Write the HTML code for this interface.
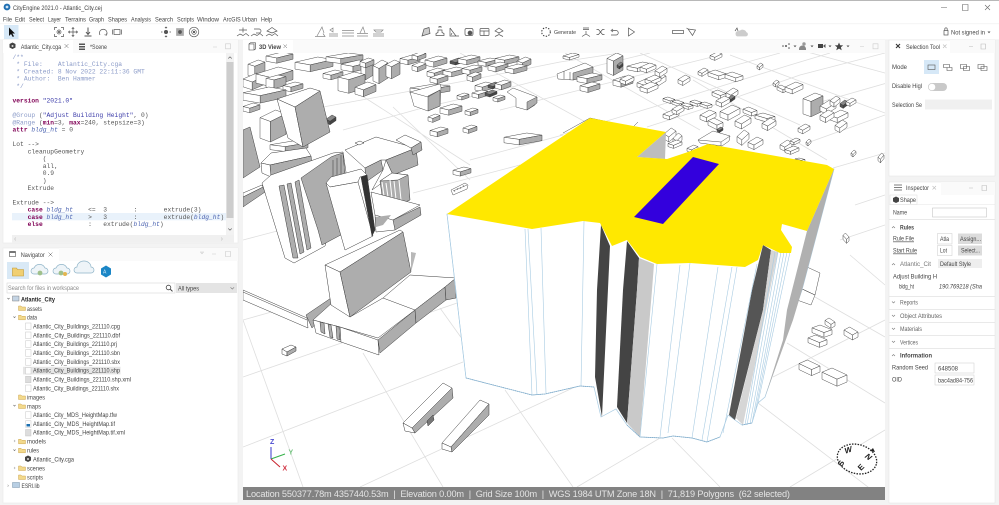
<!DOCTYPE html>
<html><head><meta charset="utf-8"><title>CityEngine 2021.0 - Atlantic_City.cej</title>
<style>
html,body{margin:0;padding:0;width:999px;height:505px;overflow:hidden;background:#f2f2f2}
svg{display:block;filter:blur(.38px)}
text{font-family:"Liberation Sans",sans-serif;fill:#444;font-size:6.5px;white-space:pre}
text.m{font-family:"Liberation Mono",monospace;font-size:6.3px;fill:#555}
.c{fill:#8b9bc8!important}
.k{fill:#7f0055!important;font-weight:bold}
.s{fill:#3a3aa8!important}
.i{fill:#4a62b0!important;font-style:italic}
.ic{fill:none;stroke:#555;stroke-width:.7}
.b *{vector-effect:non-scaling-stroke}
.g{fill:none;stroke:#dedede;stroke-width:.8}
.bd{stroke:#3a3a3a;stroke-width:.45;fill:#fff}
.sym *{stroke:#3a3a3a;stroke-width:.45;vector-effect:non-scaling-stroke}
.bl{stroke:#a8cbe2;stroke-width:.6;fill:none}
.gt text,text.gt{fill:#666}
</style></head><body>
<svg width="999" height="505" viewBox="0 0 999 505" xmlns="http://www.w3.org/2000/svg">
<defs>
<clipPath id="vp"><rect x="243" y="53" width="642" height="434"/></clipPath>
<g id="b" class="sym"><path d="M0 5L12 0L20 2.500L8 7.500Z" fill="#fff"/><path d="M0 5L8 7.500V14L0 11.500Z" fill="#fff"/><path d="M8 7.500L20 2.500V9L8 14Z" fill="#adadad"/></g>
<g id="t" class="sym"><path d="M0 6L12 0L20 3L8 9Z" fill="#fff"/><path d="M0 6L8 9V25L0 22Z" fill="#fff"/><path d="M8 9L20 3V19L8 25Z" fill="#adadad"/></g>
<g id="w" class="sym"><path d="M0 6L12 0L20 3L8 9Z" fill="#fff"/><path d="M0 6L8 9V14L0 11Z" fill="#fff"/><path d="M8 9L20 3V8L8 14Z" fill="#fff"/></g>
<g id="n" class="sym"><path d="M0 3L8 0L20 5L12 8Z" fill="#fff"/><path d="M0 3L12 8V13L0 8Z" fill="#fff"/><path d="M12 8L20 5V10L12 13Z" fill="#fff"/></g>
<g id="d" class="sym"><path d="M0 6L12 0L20 3L8 9Z" fill="#888"/><path d="M0 6L8 9V14L0 11Z" fill="#555"/><path d="M8 9L20 3V8L8 14Z" fill="#444"/></g>
</defs>

<!-- window chrome -->
<rect width="999" height="505" fill="#f3f3f3"/>
<rect width="999" height="40" fill="#fff"/>
<rect width="999" height="1" fill="#b8b8b8"/>
<rect y="23.500" width="999" height=".6" fill="#ececec"/>
<rect y="39.500" width="999" height=".6" fill="#ececec"/>
<circle cx="7" cy="7" r="3.400" fill="#1f6fb2"/><circle cx="7" cy="7" r="1.400" fill="#cfe4f5"/>
<text x="13" y="9.800" style="font-size:6.800px" textLength="89" lengthAdjust="spacingAndGlyphs">CityEngine 2021.0 - Atlantic_City.cej</text>
<path d="M941 7.500h6M962.500 4.500h5.500v6h-5.500zM985 5l5 5M990 5l-5 5" fill="none" stroke="#666" stroke-width=".6"/>
<g>
<text x="3" y="21.500" textLength="9" lengthAdjust="spacingAndGlyphs">File</text>
<text x="15" y="21.500" textLength="10" lengthAdjust="spacingAndGlyphs">Edit</text>
<text x="29" y="21.500" textLength="15" lengthAdjust="spacingAndGlyphs">Select</text>
<text x="48" y="21.500" textLength="13" lengthAdjust="spacingAndGlyphs">Layer</text>
<text x="65" y="21.500" textLength="21" lengthAdjust="spacingAndGlyphs">Terrains</text>
<text x="89" y="21.500" textLength="15" lengthAdjust="spacingAndGlyphs">Graph</text>
<text x="108" y="21.500" textLength="19" lengthAdjust="spacingAndGlyphs">Shapes</text>
<text x="131" y="21.500" textLength="20" lengthAdjust="spacingAndGlyphs">Analysis</text>
<text x="155" y="21.500" textLength="18" lengthAdjust="spacingAndGlyphs">Search</text>
<text x="177" y="21.500" textLength="17" lengthAdjust="spacingAndGlyphs">Scripts</text>
<text x="197" y="21.500" textLength="22" lengthAdjust="spacingAndGlyphs">Window</text>
<text x="223" y="21.500" textLength="34" lengthAdjust="spacingAndGlyphs">ArcGIS Urban</text>
<text x="261" y="21.500" textLength="11" lengthAdjust="spacingAndGlyphs">Help</text>
</g>

<!-- toolbar -->
<rect x="4" y="25" width="14.500" height="14" fill="#d6e8f7"/>
<path d="M9 27.500V36L11 34L12.800 37L14 36.300L12.300 33.500H15Z" fill="#111"/>
<g class="ic">
<path d="M54.500 30v-2.500h2.500M61 27.500h2.500V30M63.500 34v2.500H61M57 36.500h-2.500V34"/><circle cx="59" cy="32" r="2"/><circle cx="59" cy="32" r=".7" fill="#555"/>
<path d="M73 27.500v9M68.500 32h9M71.800 28.700L73 27.500l1.200 1.200M71.800 35.300L73 36.500l1.200-1.200M69.700 30.800L68.500 32l1.200 1.200M76.300 30.800L77.500 32l-1.200 1.200"/>
<path d="M88 27.500v6.500M86 32l2 2.500 2-2.500M84.500 36h7" stroke-width="1"/>
<path d="M100 35a3.800 3.800 0 1 1 6.500 0M106.800 33l-.3 2.200-2-.5"/>
<rect x="114" y="29.500" width="6" height="5"/><path d="M112.500 29.500v5M121.500 29.500v5"/>
<circle cx="166" cy="32" r="1.700" fill="#555"/><path d="M166 27v1.500M166 35.500V37M161 32h1.500M169.500 32h1.500M164.900 28l1.100-1 1.100 1M164.900 36l1.100 1 1.100-1"/>
<rect x="176.500" y="28.500" width="7" height="7" fill="#aaa" stroke="#aaa"/><circle cx="180" cy="32" r="1.500" fill="#555"/>
<circle cx="194" cy="32" r="4.800"/><circle cx="194" cy="32" r="2.300"/><circle cx="194" cy="32" r=".8" fill="#555"/>
<path d="M237 36l3-2 3 1.500 3-2 3 2.500M243 27.500v5M239 30h8M251 36l3-2 3 1.500 3-2 3 2.500M254 29h5a2 2 0 0 1 0 4h-3M266 36l3-2 3 1.500 3-2 3 2.500M267 31l5-3.500 5 3.500-5 2z"/>
<path d="M315 36.500h10l-2-3M317 36l5-9 2 6M329 36h9M329 34h9M330 30l3 2V28zM342 36h12M342 33h12M342 30.500h12M357 36h11M357 33.500h11M360 33l3-6 2 6M373 36h11M373 34h11M374 30h9l-2 2h-5z" stroke="#888"/>
<path d="M422 36l2-7 5-1.500 1 6z" fill="#ccc"/>
<path d="M436 35.500h8v-2l-2-1v-2.500h-4v2.500l-2 1zM439 28v-1.500h2V28" />
<path d="M450 28v8h9M450 28l6 8M451 35l1-2"/>
<rect x="465" y="28.500" width="8" height="7" rx="1.500"/><circle cx="470" cy="33" r="2" fill="#555"/><rect x="480" y="28.500" width="9" height="7" rx="1"/><path d="M480 31h9M484 31v4.500"/>
<path d="M495 31l4-3 4 3-4 2zM499 33v1M495 36.500l4-2 4 2"/>
<circle cx="546" cy="32" r="4.300" stroke-dasharray="1.400 1.400" stroke="#333" stroke-width="1"/>
<path d="M583 28h6M583 29.500h6M586 31v3M582 36.500l4-2.500 4 2.500M596.500 29.500h2l4 5h2M596.500 34.500h2l4-5h2M611 35h5a1.500 1.500 0 0 0 0-4.500h-4M613 29l-2 1.500 2 1.500M628.500 28v8l6-4z"/>
<rect x="672.500" y="30.500" width="11" height="3"/><path d="M688 29l7.500 1-3 5.500zM688 29l-1.500-1"/>
<path d="M735 31l2-3 1 3" /><path d="M736 34a3.500 2.500 0 0 1 4-3 3.500 3 0 0 1 6 1.500 2 1.800 0 0 1 0 3.500h-9a2 2 0 0 1-1-2z" fill="#ccc" stroke="#ccc"/>
<rect x="944" y="30.500" width="4" height="4.500"/><path d="M944.800 30.500V29a1.200 1.200 0 0 1 2.400 0v1.500"/>
</g>
<text x="554" y="34.200" style="font-size:5.800px" textLength="22" lengthAdjust="spacingAndGlyphs">Generate</text>
<text x="951" y="34.300" textLength="34" lengthAdjust="spacingAndGlyphs">Not signed in</text><path d="M987.500 31.500h3l-1.500 1.800z" fill="#555"/>

<!-- editor panel -->
<rect x="3" y="40" width="235" height="203" fill="#fff" stroke="#e9e9e9" stroke-width=".6"/>
<rect x="73" y="40" width="165" height="13" fill="#fafafa"/>
<rect x="3" y="40" width="70" height="13" fill="#fff"/>
<path d="M9.500 44l3-1.500 3 1.500v3.500l-3 1.500-3-1.500z" fill="#444"/><circle cx="12.500" cy="46" r="1" fill="#ddd"/>
<text x="20.700" y="48.800" textLength="40.500" lengthAdjust="spacingAndGlyphs">Atlantic_City.cga</text>
<path d="M64.500 44l4 4M68.500 44l-4 4" stroke="#666" stroke-width=".5" fill="none"/>
<path d="M79 43.500h6v1.500h-6zM79 46h6v1.500h-6zM79 48.500h6V50h-6z" fill="#555"/>
<text x="90" y="48.800" textLength="17" lengthAdjust="spacingAndGlyphs">*Scene</text>
<path d="M213 47h4M225.500 43.800h5v5h-5z" stroke="#ccc" stroke-width=".6" fill="none"/>

<rect x="12" y="213" width="214" height="7.300" fill="#e9f2fb"/>
<text class="m c" x="12.500" y="58.800">/**</text>
<text class="m c" x="12.500" y="66"> * File:    Atlantic_City.cga</text>
<text class="m c" x="12.500" y="73.300"> * Created: 8 Nov 2022 22:11:36 GMT</text>
<text class="m c" x="12.500" y="80.600"> * Author:  Ben Hammer</text>
<text class="m c" x="12.500" y="87.900"> */</text>
<text class="m" x="12.500" y="102.500"><tspan class="k">version</tspan> <tspan class="s">"2021.0"</tspan></text>
<text class="m" x="12.500" y="117"><tspan class="c">@Group</tspan> (<tspan class="s">"Adjust Building Height"</tspan>, 0)</text>
<text class="m" x="12.500" y="124.400"><tspan class="c">@Range</tspan> (<tspan class="k">min</tspan>=3, <tspan class="k">max</tspan>=240, stepsize=3)</text>
<text class="m" x="12.500" y="131.700"><tspan class="k">attr</tspan> <tspan class="i">bldg_ht</tspan> = 0</text>
<text class="m" x="12.500" y="146">Lot --&gt;</text>
<text class="m" x="12.500" y="153.300">    cleanupGeometry</text>
<text class="m" x="12.500" y="160.600">        (</text>
<text class="m" x="12.500" y="167.900">        all,</text>
<text class="m" x="12.500" y="175.200">        0.9</text>
<text class="m" x="12.500" y="182.500">        )</text>
<text class="m" x="12.500" y="189.800">    Extrude</text>
<text class="m" x="12.500" y="204.300">Extrude --&gt;</text>
<text class="m" x="12.500" y="211.600">    <tspan class="k">case</tspan> <tspan class="i">bldg_ht</tspan>    &lt;=  3       :       extrude(3)</text>
<text class="m" x="12.500" y="218.900">    <tspan class="k">case</tspan> <tspan class="i">bldg_ht</tspan>    &gt;   3       :       extrude(<tspan class="i">bldg_ht</tspan>)</text>
<text class="m" x="12.500" y="226.200">    <tspan class="k">else</tspan>            :   extrude(<tspan class="i">bldg_ht</tspan>)</text>
<rect x="226" y="53" width="8" height="182" fill="#f2f2f2"/>
<rect x="226.500" y="62" width="7" height="156" fill="#cdcdcd"/>
<path d="M228.300 58.500l1.700-1.700 1.700 1.700M228.300 228.500l1.700 1.700 1.700-1.700" stroke="#555" fill="none" stroke-width=".6"/>
<rect x="12" y="235" width="222" height="7.500" fill="#f0f0f0"/>
<path d="M16 237.500l-1.500 1.500 1.500 1.500M221 237.500l1.500 1.500-1.500 1.500" stroke="#aaa" fill="none" stroke-width=".5"/>

<!-- navigator -->
<rect x="3" y="248" width="235" height="255" fill="#fff" stroke="#e9e9e9" stroke-width=".6"/>
<rect x="59" y="248" width="179" height="13" fill="#fafafa"/>
<rect x="9.500" y="251.500" width="6" height="5" fill="none" stroke="#555" stroke-width=".6"/><rect x="9.500" y="251.500" width="6" height="1.300" fill="#555"/>
<text x="20.700" y="256.800" textLength="24" lengthAdjust="spacingAndGlyphs">Navigator</text>
<path d="M48.500 252.500l4 4M52.500 252.500l-4 4" stroke="#666" stroke-width=".5" fill="none"/>
<path d="M200.500 252h3l-1.500 1.800zM212 254h4M225.500 251.500h5v5h-5z" stroke="#ccc" stroke-width=".6" fill="none"/>
<rect x="7" y="262" width="22" height="17" fill="#d9e9f6"/>
<path d="M12.500 276v-8h4l1 1.500h6v6.500z" fill="#f0cf72" stroke="#c39a32" stroke-width=".6"/>
<g fill="#eef4f8" stroke="#8fb4c8" stroke-width=".7">
<path d="M34 274a3 3 0 0 1 0-6 6 6 0 0 1 11 0 3 3 0 0 1 0 6z"/><path d="M56 274a3 3 0 0 1 0-6 6 6 0 0 1 11 0 3 3 0 0 1 0 6z"/><path d="M77 273a3 3 0 0 1 0-6 7 6 0 0 1 14 0 3 3 0 0 1 0 6z"/>
</g>
<circle cx="40" cy="273" r="2.400" fill="#9fc08b"/><circle cx="61" cy="273" r="2.400" fill="#9fc08b"/><circle cx="65" cy="274" r="2" fill="#e3b54f"/>
<path d="M106 265.500l5 3v6l-5 3-5-3v-6z" fill="#1b86c6"/><text x="103" y="273.300" style="font-size:5px;fill:#cde8f8">A</text>
<rect x="7" y="283" width="168" height="10" fill="#fff" stroke="#d8d8d8" stroke-width=".6"/>
<text x="8" y="290.200" style="fill:#8a8a8a" textLength="71" lengthAdjust="spacingAndGlyphs">Search for files in workspace</text>
<circle cx="168.500" cy="287.500" r="2.300" fill="none" stroke="#444" stroke-width=".8"/><path d="M170.300 289.200l2.200 2.200" stroke="#444" stroke-width="1"/>
<rect x="176" y="283" width="61" height="10" fill="#e4e4e4"/>
<text x="178" y="290.300" textLength="21" lengthAdjust="spacingAndGlyphs">All types</text><path d="M230.500 287.300l1.800 1.800 1.800-1.800" stroke="#777" fill="none" stroke-width=".6"/>
<rect x="23" y="366.800" width="97.500" height="7.600" fill="#e6e6e6"/>
<path d="M7.500 298l1 1.200 1-1.200" fill="none" stroke="#666" stroke-width=".6"/>
<rect x="12.500" y="296" width="6.500" height="5" fill="#c4d4e4" stroke="#666" stroke-width=".4"/>
<text x="21" y="301.500" style="font-weight:bold;fill:#222" textLength="34" lengthAdjust="spacingAndGlyphs">Atlantic_City</text>
<path d="M13.500 316.500l1 1.200 1-1.200M13.500 405l1 1.200 1-1.200M13.500 449.500l1 1.200 1-1.200" fill="none" stroke="#666" stroke-width=".6"/>
<path d="M14 440l1.100 1-1.100 1M14 467l1.100 1-1.100 1M7.500 484.700l1.100 1-1.100 1" fill="none" stroke="#aaa" stroke-width=".6"/>
<g fill="#f2d98c" stroke="#c9a24a" stroke-width=".45">
<path d="M18.500 310.500v-4.500h2.500l1 1h3.500v3.500z"/><path d="M18.500 319.800v-4.500h2.500l1 1h3.500v3.500z"/><path d="M18.500 399.500v-4.500h2.500l1 1h3.500v3.500z"/><path d="M18.500 408.500v-4.500h2.500l1 1h3.500v3.500z"/><path d="M18.500 443.800v-4.500h2.500l1 1h3.500v3.500z"/><path d="M18.500 452.800v-4.500h2.500l1 1h3.500v3.500z"/><path d="M18.500 470.500v-4.500h2.500l1 1h3.500v3.500z"/><path d="M18.500 479.500v-4.500h2.500l1 1h3.500v3.500z"/>
</g>
<g fill="#fff" stroke="#c2c2c2" stroke-width=".45">
<rect x="25.500" y="323" width="5.500" height="6.500"/><rect x="25.500" y="332" width="5.500" height="6.500"/><rect x="25.500" y="340.800" width="5.500" height="6.500"/><rect x="25.500" y="349.700" width="5.500" height="6.500"/><rect x="25.500" y="358.700" width="5.500" height="6.500"/><rect x="25.500" y="367.500" width="5.500" height="6.500"/><rect x="25.500" y="376.300" width="5.500" height="6.500" fill="#ddd"/><rect x="25.500" y="385" width="5.500" height="6.500"/><rect x="25.500" y="411.800" width="5.500" height="6.500"/><rect x="25.500" y="420.800" width="5.500" height="6.500"/><rect x="25.500" y="429.500" width="5.500" height="6.500" fill="#ddd"/>
</g>
<rect x="26.500" y="424" width="3.500" height="2.500" fill="#1b6fb0"/>
<path d="M25 457l3-1.500 3 1.500v3.500l-3 1.500-3-1.500z" fill="#444"/><circle cx="28" cy="459" r="1" fill="#ddd"/>
<rect x="12.500" y="482.500" width="7" height="5" fill="#b8cfe4" stroke="#6d8aa4" stroke-width=".45"/>
<text x="27" y="310.800" textLength="15" lengthAdjust="spacingAndGlyphs">assets</text>
<text x="27" y="319.700" textLength="10" lengthAdjust="spacingAndGlyphs">data</text>
<text x="33" y="328.400" textLength="87" lengthAdjust="spacingAndGlyphs">Atlantic_City_Buildings_221110.cpg</text>
<text x="33" y="337.400" textLength="87" lengthAdjust="spacingAndGlyphs">Atlantic_City_Buildings_221110.dbf</text>
<text x="33" y="346.100" textLength="84" lengthAdjust="spacingAndGlyphs">Atlantic_City_Buildings_221110.prj</text>
<text x="33" y="355.100" textLength="87" lengthAdjust="spacingAndGlyphs">Atlantic_City_Buildings_221110.sbn</text>
<text x="33" y="364.100" textLength="87" lengthAdjust="spacingAndGlyphs">Atlantic_City_Buildings_221110.sbx</text>
<text x="33" y="372.700" textLength="87" lengthAdjust="spacingAndGlyphs">Atlantic_City_Buildings_221110.shp</text>
<text x="33" y="381.700" textLength="98" lengthAdjust="spacingAndGlyphs">Atlantic_City_Buildings_221110.shp.xml</text>
<text x="33" y="390.400" textLength="86" lengthAdjust="spacingAndGlyphs">Atlantic_City_Buildings_221110.shx</text>
<text x="27" y="399.400" textLength="18" lengthAdjust="spacingAndGlyphs">images</text>
<text x="27" y="408.400" textLength="14" lengthAdjust="spacingAndGlyphs">maps</text>
<text x="33" y="417.100" textLength="84" lengthAdjust="spacingAndGlyphs">Atlantic_City_MDS_HeightMap.tfw</text>
<text x="33" y="426.100" textLength="82" lengthAdjust="spacingAndGlyphs">Atlantic_City_MDS_HeightMap.tif</text>
<text x="33" y="434.700" textLength="92" lengthAdjust="spacingAndGlyphs">Atlantic_City_MDS_HeightMap.tif.xml</text>
<text x="27" y="443.700" textLength="19" lengthAdjust="spacingAndGlyphs">models</text>
<text x="27" y="452.700" textLength="12" lengthAdjust="spacingAndGlyphs">rules</text>
<text x="33" y="461.700" textLength="41" lengthAdjust="spacingAndGlyphs">Atlantic_City.cga</text>
<text x="27" y="470.400" textLength="18" lengthAdjust="spacingAndGlyphs">scenes</text>
<text x="27" y="479.400" textLength="16" lengthAdjust="spacingAndGlyphs">scripts</text>
<text x="21.500" y="488.100" textLength="18" lengthAdjust="spacingAndGlyphs">ESRI.lib</text>

<!-- 3D tab -->
<rect x="243" y="40" width="642" height="14" fill="#fafafa"/>
<rect x="243" y="40" width="50" height="13" fill="#fff"/>
<path d="M249 44h5v6h-5zM249 44l1.500-1.200h5V49l-1.500 1" fill="none" stroke="#444" stroke-width=".6"/>
<text x="259" y="49" style="font-weight:bold" textLength="22" lengthAdjust="spacingAndGlyphs">3D View</text>
<path d="M283.500 44.500l3.500 3.500M287 44.500l-3.500 3.500" stroke="#666" stroke-width=".5" fill="none"/>
<g fill="#555" stroke="none">
<circle cx="786" cy="46" r="1"/><circle cx="783" cy="46" r=".8"/><circle cx="789" cy="44" r=".8"/><circle cx="789" cy="48" r=".8"/>
<path d="M793.500 45.500h3l-1.500 1.800zM810.500 45.500h3l-1.500 1.800zM828.500 45.500h3l-1.500 1.800zM846.500 45.500h3l-1.500 1.800z"/>
<path d="M799 49.500a3.500 3.500 0 0 1 7-1v1.500h-7z" fill="#888"/><circle cx="804" cy="44" r="1.700" fill="#999"/>
<rect x="818" y="44" width="5" height="4" fill="#444"/><path d="M823 46l2.500-2v4z"/>
<path d="M839 42.500l1.200 2.700 3 .2-2.300 1.900.8 2.900-2.700-1.600-2.700 1.600.8-2.900-2.300-1.900 3-.2z" fill="#444"/>
</g>
<path d="M860 46.500h4M873 43.800h5v5h-5z" stroke="#ccc" stroke-width=".6" fill="none"/>

<!-- 3D viewport -->
<g clip-path="url(#vp)">
<rect x="243" y="53" width="642" height="434" fill="#fff"/>
<path class="g" d="M243 447L463 362M243 377L460 302M360 487L590 380M577 487L660 438M790 487L885 430M773 377L885 320M243 320L275 311M413 193L520 165M323 107L400 93L470 80L560 62L620 53M343 130L426 107L500 90L600 65L650 53M470 160L563 135M647 127L700 110L800 75L885 53M807 143L885 115M803 107L887 83M833 168L885 153M700 75L780 53M500 110L620 80L720 55M560 135L660 105L790 65L830 53M243 320L303 487M363 353L443 487M440 308L470 350M505 390L573 487M672 438L720 487M758 403L885 500M787 343L885 403M815 297L885 337M640 53L800 125M730 55L885 113M800 50L885 73M693 80L827 160M565 53L700 130M393 107L470 180M460 53L600 130M345 85L470 165M243 240L300 225M840 240L885 225M855 205L885 195M850 255L885 285M470 200L560 168"/>

<g class="b">
<use href="#b" transform="translate(266 52) scale(1.350 .8)"/>
<use href="#b" transform="translate(295 57) scale(1.900 1.050)"/>
<use href="#b" transform="translate(326 53) scale(1.850 .75)"/>
<use href="#b" transform="translate(341 60) scale(1.500 .85)"/>
<use href="#t" transform="translate(248 60) scale(.85 .7)"/>
<use href="#t" transform="translate(361 61) scale(.6 .75)"/>
<use href="#t" transform="translate(373 60) scale(.75 .95)"/>
<use href="#t" transform="translate(386 60) scale(.7 .75)"/>
<use href="#b" transform="translate(323 70) scale(1 .7)"/>
<use href="#t" transform="translate(338 72) scale(1.350 .85)"/>
<use href="#b" transform="translate(355 82) scale(1.050 1.050)"/>
<use href="#b" transform="translate(243 73) scale(1.150 1.200)"/>
<use href="#b" transform="translate(256 67) scale(1.850 1.400)"/>
<use href="#t" transform="translate(266 75) scale(1 .55)"/>
<use href="#b" transform="translate(283 82) scale(1 .7)"/>
<use href="#b" transform="translate(243 87) scale(2.150 1.150)"/>
<use href="#b" transform="translate(243 103) scale(.85 .7)"/>
<use href="#t" transform="translate(260 110) scale(1.300 1.280)"/>
<use href="#d" transform="translate(326 115) scale(.5 .7)"/>
<use href="#b" transform="translate(270 141) scale(1.900 .75)"/>
<use href="#b" transform="translate(400 55) scale(1 .7)"/><use href="#b" transform="translate(412 52) scale(.7 .6)"/><use href="#b" transform="translate(425 56) scale(1.100 .8)"/><use href="#d" transform="translate(450 58) scale(.7 .5)"/><use href="#b" transform="translate(458 55) scale(1.100 .7)"/><use href="#b" transform="translate(478 58) scale(1 .6)"/><use href="#b" transform="translate(495 55) scale(1.200 .7)"/><use href="#b" transform="translate(517 57) scale(.7 .8)"/><use href="#b" transform="translate(360 58) scale(.7 .7)"/>
<use href="#b" transform="translate(427 68) scale(.9 .7)"/><use href="#b" transform="translate(443 67) scale(1.100 .7)"/><use href="#b" transform="translate(462 65) scale(1 .7)"/><use href="#b" transform="translate(488 62) scale(1 .7)"/><use href="#b" transform="translate(467 72) scale(.7 .7)"/><use href="#b" transform="translate(505 64) scale(1.100 .7)"/>
<use href="#b" transform="translate(430 74) scale(.9 .7)"/><use href="#b" transform="translate(412 62) scale(.7 .7)"/>
<use href="#b" transform="translate(410 84) scale(2 .8)"/>
<path d="M410 92L440 84L441 87L440 106L428 111L414 106Z" class="bd"/><path d="M428 96L440 90L440 106L428 111Z" class="bd" style="fill:#adadad"/><path d="M410 92L428 97L440 90" class="bd" style="fill:none"/>
<use href="#b" transform="translate(440 104) scale(1.100 .8)"/>
<use href="#b" transform="translate(428 114) scale(.6 .6)"/>
<use href="#b" transform="translate(430 127) scale(.9 .7)"/>
<use href="#b" transform="translate(457 93) scale(.6 .5)"/><use href="#b" transform="translate(493 95) scale(.6 .5)"/>
<use href="#b" transform="translate(475 82) scale(.9 .7)"/><use href="#d" transform="translate(488 82) scale(.6 .5)"/><use href="#b" transform="translate(495 80) scale(.8 .7)"/><use href="#b" transform="translate(472 90) scale(.8 .6)"/><use href="#d" transform="translate(485 90) scale(.6 .5)"/>
<path d="M507 92L513 88L537 97L535 105L527 110L516 107L516 98Z" class="bd"/><path d="M527 102L537 97V103L527 110Z" style="fill:#adadad" class="bd"/>
<use href="#b" transform="translate(465 108) scale(.65 .55)"/><use href="#b" transform="translate(463 125) scale(.7 .6)"/>
<use href="#b" transform="translate(504 133) scale(1.900 .85)"/>
<use href="#b" transform="translate(453 167) scale(.9 .65)"/>
<path d="M451 190L465 183L468 185L467 189L453 195Z" class="bd"/><path d="M453 191L467 185M455 192l-1-2M458 190l-1-2M461 189l-1-2M464 187l-1-2" stroke="#333" stroke-width=".4" fill="none"/>
<path d="M557 74L585 63L593 67L592 75L573 80L558 79Z" class="bd"/><path d="M573 73L593 67V75L573 80Z" style="fill:#adadad" class="bd"/><path d="M564 71v8M570 72v8" stroke="#333" stroke-width=".5"/>
<use href="#b" transform="translate(577 73) scale(1.250 .75)"/><use href="#b" transform="translate(580 82) scale(1 .75)"/>
<use href="#t" transform="translate(607 53) scale(.8 .9)"/>
<use href="#b" transform="translate(613 76) scale(1 .8)"/><use href="#w" transform="translate(627 62) scale(1.300 .7)"/><use href="#w" transform="translate(637 78) scale(.9 .8)"/><use href="#w" transform="translate(650 73) scale(.8 1)"/><use href="#w" transform="translate(620 75) scale(.7 .7)"/><use href="#d" transform="translate(617 62) scale(.3 .5)"/>
<use href="#w" transform="translate(563 53) scale(.8 .5)"/><use href="#w" transform="translate(640 63) scale(.8 .7)"/><use href="#w" transform="translate(645 75) scale(.8 .7)"/><use href="#w" transform="translate(640 82) scale(.9 .8)"/><use href="#w" transform="translate(655 66) scale(.6 .8)"/>
<use href="#w" transform="translate(698 68) scale(.5 .6)"/><use href="#n" transform="translate(708 70) scale(.9 .75)"/><use href="#n" transform="translate(725 72) scale(.9 .75)"/><use href="#w" transform="translate(678 75) scale(.6 .75)"/><use href="#w" transform="translate(710 52) scale(.6 .6)"/><use href="#w" transform="translate(757 63) scale(.3 .5)"/>
<use href="#w" transform="translate(773 80) scale(.3 .5)"/><use href="#n" transform="translate(777 85) scale(.5 .6)"/><use href="#w" transform="translate(785 82) scale(.9 .85)"/>
<use href="#n" transform="translate(712 90) scale(.7 .7)"/><use href="#w" transform="translate(726 88) scale(.6 .8)"/><use href="#d" transform="translate(728 95) scale(.35 .5)"/><use href="#w" transform="translate(716 96) scale(.7 .8)"/>
<use href="#n" transform="translate(663 97) scale(.6 .5)"/><use href="#n" transform="translate(672 100) scale(.6 .5)"/><use href="#n" transform="translate(681 103) scale(.6 .5)"/><use href="#n" transform="translate(690 100) scale(.6 .5)"/><use href="#n" transform="translate(700 102) scale(.6 .5)"/><use href="#w" transform="translate(663 110) scale(.8 .7)"/><use href="#w" transform="translate(672 105) scale(.6 .7)"/><use href="#w" transform="translate(700 110) scale(.8 .85)"/><use href="#w" transform="translate(720 105) scale(1 1.100)"/>
<use href="#n" transform="translate(743 107) scale(.7 .7)"/><use href="#n" transform="translate(755 113) scale(1 .7)"/><use href="#w" transform="translate(762 118) scale(.7 .9)"/><use href="#w" transform="translate(735 115) scale(.8 1)"/>
<path d="M698 140L713 131L730 136L729 141L722 146L700 143Z" class="bd"/><path d="M698 140L721 142L730 136M721 142V146" class="bd" style="fill:none"/>
<use href="#n" transform="translate(708 118) scale(.75 .9)"/><use href="#d" transform="translate(717 127) scale(.3 .4)"/>
<use href="#w" transform="translate(737 130) scale(.6 1.100)"/><use href="#w" transform="translate(748 137) scale(.75 .9)"/>
<use href="#t" transform="translate(803 93) scale(1 .95)"/>
<use href="#w" transform="translate(820 100) scale(.8 1)"/><use href="#w" transform="translate(830 96) scale(.5 .8)"/><use href="#d" transform="translate(840 100) scale(.4 .6)"/><use href="#w" transform="translate(846 98) scale(.5 .6)"/><use href="#w" transform="translate(830 110) scale(.9 .9)"/><use href="#w" transform="translate(835 120) scale(.6 .9)"/><use href="#w" transform="translate(820 110) scale(.7 .9)"/>
<use href="#w" transform="translate(780 140) scale(.6 .8)"/><use href="#w" transform="translate(790 138) scale(.5 .5)"/><use href="#w" transform="translate(785 146) scale(.7 .6)"/>
<use href="#w" transform="translate(798 124) scale(.6 .7)"/><use href="#w" transform="translate(806 139) scale(.25 .5)"/><use href="#w" transform="translate(851 150) scale(.25 .5)"/><use href="#w" transform="translate(878 153) scale(.3 .7)"/>
<use href="#w" transform="translate(664 128) scale(.6 1)"/><use href="#w" transform="translate(673 133) scale(.45 .9)"/><use href="#w" transform="translate(668 140) scale(.7 .6)"/>
<use href="#w" transform="translate(687 145) scale(.55 .55)"/><use href="#n" transform="translate(795 158) scale(.5 .3)"/>
<path d="M563 133L590 118L633 127L638 122" class="bd" style="fill:none"/>
<use href="#n" transform="translate(843 233) scale(.3 .8)"/>
<path d="M807 267L820 273L815 295L800 288ZM800 288L815 295L811 305L797 300Z" class="bd"/>
<use href="#n" transform="translate(825 318) scale(.5 .8)"/><use href="#n" transform="translate(812 325) scale(1 .95)"/><use href="#n" transform="translate(808 335) scale(.95 .95)"/><use href="#n" transform="translate(844 327) scale(.7 1)"/><use href="#n" transform="translate(799 360) scale(1.050 1.200)"/><use href="#n" transform="translate(822 368) scale(1.250 1.400)"/>
</g>

<g stroke="#3a3a3a" stroke-width=".5" stroke-linejoin="round">
<path d="M243 130L250 127L260 167L243 178Z" fill="#adadad"/>
<path d="M243 197L263 187L265 192L243 207Z" fill="#adadad"/>
<path d="M243 193L262 185L263 187L243 197Z" fill="#fff"/>
<path d="M261 163L271 153L306 148L311 156L270 165Z" fill="#fff"/><path d="M270 165L311 156L312 164L271 177Z" fill="#adadad"/><path d="M261 163L270 165L271 177L262 173Z" fill="#fff"/>
<path d="M277 99L310 88L320 91L295 107Z" fill="#fff"/><path d="M277 99L295 107L303 147L288 138Z" fill="#fff"/><path d="M295 107L320 91L330 132L303 147Z" fill="#adadad"/>
<path d="M345 150L376 137L416 148L386 160L381 160L365 168Z" fill="#fff"/><path d="M386 160L416 148L418 165L393 175Z" fill="#adadad"/><path d="M365 168L381 160L383 170L366 182Z" fill="#adadad"/><path d="M383 170L386 160L393 175L372 190Z" fill="#fff"/>
<path d="M396 140L405 135L421 142L411 148Z" fill="#fff"/><path d="M411 148L421 142L422 150L413 155Z" fill="#adadad"/><path d="M355 143l5-2 4 2-5 2z" fill="#fff"/>
<path d="M262 183L271 175L333 153L343 152L346 172L325 246L294 263L285 258Z" fill="#fff"/>
<path d="M301 178L331 157L336 155L343 153L350 230L322 245L318 230Z" fill="#adadad"/>
<path d="M279 186L284 185L298 258L293 258ZM287 184L291 183L304 252L300 254ZM295 182L299 180L311 248L307 250Z" fill="#adadad"/>
<path d="M333 160V182M337 158V182M341 155V182" stroke="#333" fill="none"/>
<path d="M380 181L392 173L408 175L410 200L400 204L382 195Z" fill="#adadad"/><path d="M380 181L392 173L408 175L398 180Z" fill="#fff"/><path d="M382 182l2 14M386 183l2 14M390 180l2 18M394 181l2 18M399 180l2 20" stroke="#fff" stroke-width="1" fill="none"/>
<path d="M326 183L331 177L361 169L367 175L360 177L358 182L330 187Z" fill="#fff"/>
<path d="M326 183L330 187L358 182L373 236L345 250Z" fill="#fff"/>
<path d="M361 177L367 175L375 230L372 236Z" fill="#333"/>
<path d="M371 192L420 205L393 220L375 215Z" fill="#fff"/><path d="M393 220L420 207L421 215L395 230Z" fill="#adadad"/><path d="M375 217L391 215L383 225L376 227Z" fill="#adadad" stroke="none"/>
<path d="M375 215L376 232L395 230" fill="none"/>
<path d="M243 290L307 318L308 328L243 300Z" fill="#fff"/>
<path d="M243 292L307 320" fill="none"/>
<path d="M306 315L331 298L332 305L312 328Z" fill="#adadad"/>
<path d="M313 320L333 302L350 317L383 298L410 275L456 278L445 287L415 310L378 338L340 327Z" fill="#fff"/>
<path d="M313 320L340 327L341 342L316 333Z" fill="#fff"/>
<path d="M320 322L324 323L325 334L321 332ZM328 324L331 325L333 338L330 337ZM336 326L339 327L340 340L337 339Z" fill="#adadad"/>
<path d="M340 327L378 340L379 355L341 342Z" fill="#fff"/>
<path d="M378 340L415 310L416 323L380 353Z" fill="#adadad"/>
<path d="M415 310L445 287L446 300L416 323Z" fill="#adadad"/>
<path d="M445 287L456 278V298L446 300Z" fill="#adadad"/>
<path d="M383 298L415 310" fill="none"/>
<path d="M325 265L400 230L403 232L340 272Z" fill="#fff"/><path d="M325 265L340 272L350 317L331 305Z" fill="#fff"/><path d="M340 272L403 232L411 272L350 317Z" fill="#adadad"/>
<path d="M411 252L416 253L411 272Z" fill="#b8b8b8" stroke="none"/>
<path d="M282 349L291 345L296 347L287 352Z" fill="#fff"/><path d="M282 349L287 352V356L282 354Z" fill="#fff"/><path d="M287 352L296 347V351L287 356Z" fill="#adadad"/>
<path d="M403 423L443 383L452 388L412 428Z" fill="#fff"/><path d="M412 428L452 388L453 398L415 433Z" fill="#adadad"/><path d="M403 423L412 428L415 433L405 431Z" fill="#fff"/><path d="M427 421l6-6 1 5-6 6z" fill="#777"/>
<path d="M442 443L480 400L489 404L451 447Z" fill="#fff"/><path d="M451 447L489 404L489 415L452 452Z" fill="#adadad"/><path d="M442 443L451 447L452 452L442 449Z" fill="#fff"/>
</g>

<!-- main building -->
<path d="M447 214L466 378L532 395L545 394L580 386L594 387L601 417L616 409L627 425L640 437L663 438L673 436L692 438L707 442L720 437L728 415L742 425L752 423L758 403L765 397L802 290L834 169Z" fill="#fff" stroke="#a8cbe2" stroke-width=".7"/>
<path d="M666 132L637 157L665 159Z" fill="#bdbdbd"/>
<path d="M834 169L807 231L787 310L783 340L765 397L793 320L802 290Z" fill="#b0b0b0"/>
<path d="M601 225L610 246L607 310L602 417L595 377L597 290Z" fill="#444"/>
<path d="M627 241L639 258L637 290L627 423L617 407L623 290Z" fill="#444"/>
<path d="M639 258L654 264L652 290L640 437L627 423L637 290Z" fill="#c9c9c9"/>
<path d="M763 245L771 250L763 310L735 420L729 415L752 290Z" fill="#555"/>
<path d="M771 250L778 252L770 290L743 425L736 418L763 310Z" fill="#d6d6d6"/>
<g class="bl">
<path d="M447 214L466 378M525 229L532 395M528 229L537 395M541 228L546 393M584 221L581 386M657 264L640 437M680 265L660 437M690 263L668 433M718 267L692 438M732 267L702 440M737 267L707 442M757 264L723 433M775 252L745 425M778 252L747 425M781 252L750 424M784 252L752 423M787 252L755 413M790 252L758 403"/>
<path d="M466 378L532 395L545 394L580 386L594 387M627 425L640 437L663 438L673 436L692 438L707 442L720 437M742 425L752 423" stroke="#7ea9c8" stroke-width=".8" stroke-dasharray="1.500 .6"/>
</g>
<path d="M447 214L590 118L666 132L637 157L667 159L688 152L708 144L827 165L834 169L807 231L782 224L781 230L792 247L791 253L780 253L763 245L758 260L745 267L690 263L657 264L640 257L627 240L612 246L600 223L583 221L532 229Z" fill="#ffe800"/>
<path d="M693 157L719 164L663 224L634 217Z" fill="#3300dd"/>

<!-- gizmo -->
<path d="M271 459V447" stroke="#3a3acb" stroke-width="1"/><path d="M271 459L285 454" stroke="#35b24a" stroke-width="1"/><path d="M271 459L280 467" stroke="#c8202a" stroke-width="1"/>
<text x="270" y="444" style="font-size:7px;fill:#4a4ad0;font-weight:bold">Z</text>
<text x="288.500" y="454.500" style="font-size:7px;fill:#6ec07a;font-weight:bold">Y</text>
<text x="282.500" y="470.500" style="font-size:7px;fill:#d03040;font-weight:bold">X</text>
<!-- compass -->
<g transform="translate(857 459) rotate(15)">
<ellipse rx="20" ry="14.500" fill="#fff" stroke="#222" stroke-width="1.300" stroke-dasharray="1.500 1.300"/>
</g>
<text transform="translate(864 457) rotate(35) skewX(-15)" style="font-size:8px;font-weight:bold;fill:#222">N</text>
<text transform="translate(845 454) rotate(-20) skewX(-15)" style="font-size:8px;font-weight:bold;fill:#222">W</text>
<text transform="translate(842 467) rotate(-60)" style="font-size:8px;font-weight:bold;fill:#222">S</text>
<text transform="translate(861 471) rotate(-45)" style="font-size:8px;font-weight:bold;fill:#222">E</text>
<path d="M875 452L873 448L870 451Z" fill="#222"/>
</g>
<!-- status bar -->
<rect x="243" y="487" width="642" height="13" fill="#828282"/>
<text x="246" y="496.800" textLength="544" lengthAdjust="spacing" style="font-size:9.200px;fill:#e4e4e4">Location 550377.78m 4357440.53m  |  Elevation 0.00m  |  Grid Size 100m  |  WGS 1984 UTM Zone 18N  |  71,819 Polygons  (62 selected)</text>

<!-- selection tool panel -->
<rect x="889" y="40" width="106" height="136" fill="#fff" stroke="#e6e6e6" stroke-width=".6"/>
<rect x="950" y="40" width="45" height="13" fill="#fafafa"/>
<path d="M896 44l4 4M900 44l-4 4" stroke="#333" stroke-width="1.100" fill="none"/>
<text x="906" y="48.800" textLength="34" lengthAdjust="spacingAndGlyphs">Selection Tool</text>
<path d="M943 44.500l3.500 3.500M946.500 44.500l-3.500 3.500M969 46.500h4M981 44h4.500v5H981z" stroke="#bbb" stroke-width=".6" fill="none"/>
<text x="892" y="69.200" textLength="15" lengthAdjust="spacingAndGlyphs">Mode</text>
<rect x="924" y="60" width="15" height="14" fill="#d6e8f7"/>
<g fill="none" stroke="#555" stroke-width=".6"><rect x="928" y="65" width="7" height="4.500"/><path d="M943.500 64.500h6v3h-6zM947 67.500h5v3h-5zM960.500 64.500h6v4h-6zM963.500 66.500h6v4h-6zM978 64.500h6v4h-6zM981 66.500h6v4h-6z"/></g>
<text x="892" y="88.200" textLength="30" lengthAdjust="spacingAndGlyphs">Disable Higl</text>
<rect x="928" y="83" width="19" height="8" rx="4" fill="#c9c9c9"/><circle cx="932" cy="87" r="3.300" fill="#fff"/>
<text x="892" y="107" textLength="30" lengthAdjust="spacingAndGlyphs">Selection Se</text>
<rect x="925" y="99.500" width="67" height="10" fill="#f0f0f0"/>

<!-- inspector panel -->
<rect x="889" y="182" width="106" height="321" fill="#fff" stroke="#e6e6e6" stroke-width=".6"/>
<rect x="941" y="182" width="54" height="13" fill="#fafafa"/>
<path d="M894 185h8M894 187.500h8M894 190h8" stroke="#555" stroke-width=".7"/>
<text x="906" y="190" textLength="23" lengthAdjust="spacingAndGlyphs">Inspector</text>
<path d="M932.500 186l3.500 3.500M936 186l-3.500 3.500M969 188h4M982 185.500h4.500v5H982z" stroke="#bbb" stroke-width=".6" fill="none"/>
<rect x="890" y="195" width="27" height="9.500" fill="#fff" stroke="#ddd" stroke-width=".5"/>
<path d="M893 198l3-1.500 3 1.500v3.500l-3 1.500-3-1.500z" fill="#444"/>
<text x="900" y="202" textLength="16" lengthAdjust="spacingAndGlyphs">Shape</text>
<path d="M889 204.500H995" stroke="#e6e6e6" stroke-width=".6"/>
<text x="893" y="214.500" textLength="14" lengthAdjust="spacingAndGlyphs">Name</text>
<rect x="932.500" y="208" width="54" height="9" fill="#fff" stroke="#bbb" stroke-width=".5"/>
<path d="M889 219.500H995M889 296.500H995M889 309.500H995M889 322.500H995M889 335.500H995M889 348.500H995" stroke="#e2e2e2" stroke-width=".7"/>
<g fill="none" stroke="#777" stroke-width=".6">
<path d="M892 228l1.500-1.500 1.500 1.500M892 265l1.500-1.500 1.500 1.500M892 356l1.500-1.500 1.500 1.500M892 301.500l1.500 1.500 1.500-1.500M892 315l1.500 1.500 1.500-1.500M892 328l1.500 1.500 1.500-1.500M892 341l1.500 1.500 1.500-1.500"/>
</g>
<text x="900" y="229.500" style="font-weight:bold" textLength="14" lengthAdjust="spacingAndGlyphs">Rules</text>
<text x="893" y="240.500" style="text-decoration:underline" textLength="21" lengthAdjust="spacingAndGlyphs">Rule File</text>
<rect x="937.500" y="233.500" width="14.500" height="10.500" fill="#fff" stroke="#ccc" stroke-width=".5"/>
<text x="940" y="240.800" textLength="9" lengthAdjust="spacingAndGlyphs">Atla</text>
<rect x="958" y="233.500" width="24" height="10.500" fill="#dcdcdc"/>
<text x="960" y="240.800" textLength="21" lengthAdjust="spacingAndGlyphs">Assign...</text>
<text x="893" y="252.500" style="text-decoration:underline" textLength="24" lengthAdjust="spacingAndGlyphs">Start Rule</text>
<rect x="937.500" y="245.500" width="14.500" height="10" fill="#fff" stroke="#ccc" stroke-width=".5"/>
<text x="940" y="252.500" textLength="7" lengthAdjust="spacingAndGlyphs">Lot</text>
<rect x="958" y="245.500" width="24" height="10" fill="#dcdcdc"/>
<text x="961" y="252.500" textLength="19" lengthAdjust="spacingAndGlyphs">Select...</text>
<text x="900" y="266" style="fill:#777" textLength="31" lengthAdjust="spacingAndGlyphs">Atlantic_Cit</text>
<rect x="938" y="259" width="44" height="9" fill="#eee"/>
<text x="940" y="265.800" textLength="31" lengthAdjust="spacingAndGlyphs">Default Style</text>
<text x="893" y="278.500" textLength="44" lengthAdjust="spacingAndGlyphs">Adjust Building H</text>
<text x="899" y="288.500" textLength="15" lengthAdjust="spacingAndGlyphs">bldg_ht</text>
<text x="939" y="288.500" style="font-style:italic" textLength="43" lengthAdjust="spacingAndGlyphs">190.769218 (Sha</text>
<text x="900" y="304.500" style="fill:#666" textLength="18" lengthAdjust="spacingAndGlyphs">Reports</text>
<text x="900" y="318" style="fill:#666" textLength="42" lengthAdjust="spacingAndGlyphs">Object Attributes</text>
<text x="900" y="331" style="fill:#666" textLength="22" lengthAdjust="spacingAndGlyphs">Materials</text>
<text x="900" y="344.500" style="fill:#666" textLength="18" lengthAdjust="spacingAndGlyphs">Vertices</text>
<text x="900" y="357.500" style="font-weight:bold" textLength="32" lengthAdjust="spacingAndGlyphs">Information</text>
<text x="892" y="369.500" textLength="36" lengthAdjust="spacingAndGlyphs">Random Seed</text>
<rect x="935" y="363" width="39" height="10" fill="#fff" stroke="#ccc" stroke-width=".5"/>
<text x="938" y="370.700" textLength="20" lengthAdjust="spacingAndGlyphs">648508</text>
<text x="892" y="381.500" textLength="10" lengthAdjust="spacingAndGlyphs">OID</text>
<rect x="935" y="375" width="39" height="10" fill="#fff" stroke="#ccc" stroke-width=".5"/>
<text x="938" y="382.700" textLength="35" lengthAdjust="spacingAndGlyphs">bac4ad84-756</text>
</svg>
</body></html>
